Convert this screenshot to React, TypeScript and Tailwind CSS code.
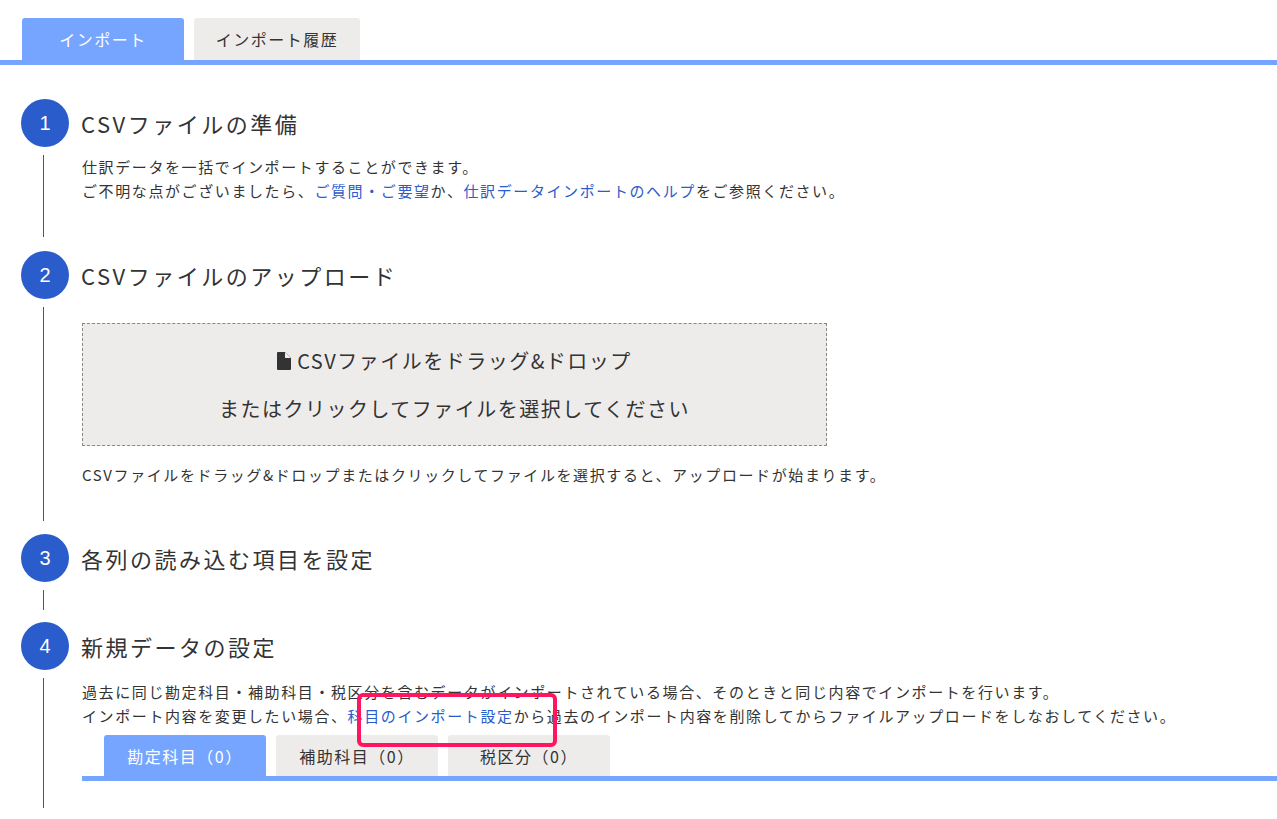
import React from "react";

const F = { fontFamily: '"Noto Sans CJK JP", "Liberation Sans", sans-serif' };

function Circle({ n }: { n: number }) {
  return (
    <div className="w-[48px] h-[48px] rounded-full bg-[#2a5ccb] text-white flex items-center justify-center text-[20px] shrink-0" style={{ fontFamily: '"Liberation Sans", sans-serif' }}>
      {n}
    </div>
  );
}

function Step({ n, title, children, lineH }: { n: number; title: string; children?: React.ReactNode; lineH: string }) {
  return (
    <div>
      <div className="flex items-center gap-[12px] pl-[21px]">
        <Circle n={n} />
        <div className="text-[22px] tracking-[2.5px] text-[#333]">{title}</div>
      </div>
      <div className="flex">
        <div className={`ml-[43px] w-[1px] bg-[#555] ${lineH} mt-[8px] shrink-0`} />
        <div className="ml-[38px] flex-1">{children}</div>
      </div>
    </div>
  );
}

export default function App() {
  return (
    <div className="w-[1277px] h-[819px] bg-white overflow-hidden relative text-[#333]" style={F}>
      <div className="pt-[18px] flex gap-[10px] pl-[22px]">
        <div className="w-[162px] h-[42px] bg-[#76a5ff] text-white rounded-t-[3px] flex items-center justify-center text-[16px] tracking-[1.5px]">インポート</div>
        <div className="w-[166px] h-[42px] bg-[#eeeceb] rounded-t-[3px] flex items-center justify-center text-[16px] tracking-[1.5px]">インポート履歴</div>
      </div>
      <div className="h-[5px] bg-[#76a5ff]" />
      <div className="pt-[34px]">
        <Step n={1} title="CSVファイルの準備" lineH="h-[82px]">
          <div className="text-[15px] tracking-[1.6px] leading-[24px] pt-[8px] whitespace-nowrap">
            <div>仕訳データを一括でインポートすることができます。</div>
            <div>
              ご不明な点がございましたら、<span className="text-[#2a5ccb]">ご質問・ご要望</span>か、<span className="text-[#2a5ccb]">仕訳データインポートのヘルプ</span>をご参照ください。
            </div>
          </div>
        </Step>
        <div className="h-[14px]" />
        <Step n={2} title="CSVファイルのアップロード" lineH="h-[214px]">
          <div className="mt-[24px] w-[745px] h-[123px] bg-[#eeeceb] border border-dashed border-[#888] flex flex-col items-center justify-center gap-[18px] text-[20px] tracking-[1.5px]">
            <div className="flex items-center gap-[6px]">
              <svg width="14" height="18" viewBox="0 0 14 18"><path d="M0 1a1 1 0 0 1 1-1h7l6 6v11a1 1 0 0 1-1 1H1a1 1 0 0 1-1-1z" fill="#333" /><path d="M8 0v6h6" fill="#eeeceb" /></svg>
              CSVファイルをドラッグ&ドロップ
            </div>
            <div>またはクリックしてファイルを選択してください</div>
          </div>
          <div className="text-[15px] tracking-[1.6px] mt-[18px] whitespace-nowrap">CSVファイルをドラッグ&ドロップまたはクリックしてファイルを選択すると、アップロードが始まります。</div>
        </Step>
        <div className="h-[13px]" />
        <Step n={3} title="各列の読み込む項目を設定" lineH="h-[20px]" />
        <div className="h-[12px]" />
        <Step n={4} title="新規データの設定" lineH="h-[130px]">
          <div className="text-[15px] tracking-[1.6px] leading-[24px] pt-[10px] whitespace-nowrap">
            <div>過去に同じ勘定科目・補助科目・税区分を含むデータがインポートされている場合、そのときと同じ内容でインポートを行います。</div>
            <div>
              インポート内容を変更したい場合、<span className="text-[#2a5ccb]">科目のインポート設定</span>から過去のインポート内容を削除してからファイルアップロードをしなおしてください。
            </div>
          </div>
          <div className="flex gap-[10px] pl-[22px] mt-[7px]">
            <div className="w-[162px] h-[41px] bg-[#76a5ff] text-white rounded-t-[3px] flex items-center justify-center text-[16px] tracking-[1.5px]">勘定科目（0）</div>
            <div className="w-[162px] h-[41px] bg-[#eeeceb] rounded-t-[3px] flex items-center justify-center text-[16px] tracking-[1.5px]">補助科目（0）</div>
            <div className="w-[162px] h-[41px] bg-[#eeeceb] rounded-t-[3px] flex items-center justify-center text-[16px] tracking-[1.5px]">税区分（0）</div>
          </div>
          <div className="h-[5px] bg-[#76a5ff]" />
        </Step>
      </div>
      <div className="absolute left-[357px] top-[693px] w-[200px] h-[54px] border-[4px] border-[#ff1560] rounded-[6px]" />
    </div>
  );
}
